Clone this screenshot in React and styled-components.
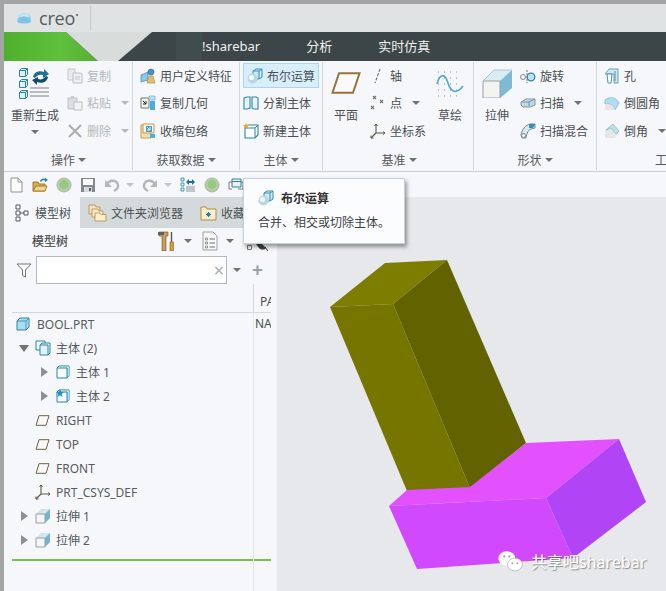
import styled, { createGlobalStyle } from 'styled-components'

const GlobalStyle = createGlobalStyle`
  html, body, #root {
    margin: 0;
    padding: 0;
    height: 100%;
  }
  body {
    overflow: hidden;
    font-family: "Noto Sans", "Noto Sans CJK SC", sans-serif;
    font-size: 12px;
    color: #4a4f52;
  }
`

const Window = styled.div`
  position: relative;
  width: 666px;
  height: 591px;
  box-sizing: border-box;
  padding: 4px 0 0 4px;
  background: #a3a5a5;
  display: flex;
  flex-direction: column;
  overflow: hidden;
`

const TitleBar = styled.div`
  height: 28px;
  flex-shrink: 0;
  background: #dfe3e3;
  display: flex;
  align-items: center;
  padding-left: 13px;
`

const CreoText = styled.span`
  font-family: "Open Sans", sans-serif;
  font-size: 18px;
  line-height: 20px;
  color: #565c5e;
  margin-left: 8px;
  letter-spacing: -0.2px;
`

const CreoDot = styled.span`
  width: 2px;
  height: 2px;
  margin: 0 0 7px 1px;
  border-radius: 50%;
  background: #565c5e;
`

const TitleDivider = styled.div`
  width: 1px;
  height: 24px;
  background: #c4c9c9;
  margin-left: 12px;
`

const TabBar = styled.div`
  position: relative;
  height: 29px;
  flex-shrink: 0;
  background: #3c4648;
  display: flex;
  align-items: center;
  gap: 46px;
  padding-left: 198px;
`

const TabArt = styled.svg`
  position: absolute;
  left: 0;
  top: 0;
`

const TabLabel = styled.span`
  position: relative;
  color: #eef1f1;
  font-size: 13px;
  line-height: 29px;
`

const Ribbon = styled.div`
  height: 111px;
  flex-shrink: 0;
  box-sizing: border-box;
  padding-top: 1px;
  background: #f5f7fa;
  border-bottom: 1px solid #c9cdd0;
  display: flex;
  overflow: hidden;
`

const Group = styled.div`
  width: ${p => p.$width}px;
  flex-shrink: 0;
  box-sizing: border-box;
  height: 108px;
  border-right: 1px solid ${p => (p.$last ? 'transparent' : '#d3d7da')};
  display: flex;
  flex-direction: column;
`

const GroupBody = styled.div`
  height: 88px;
  display: flex;
  padding-left: ${p => p.$pad || 0}px;
  gap: ${p => p.$gap || 0}px;
`

const GroupLabel = styled.div`
  height: 20px;
  display: flex;
  align-items: center;
  justify-content: ${p => (p.$start ? 'flex-start' : 'center')};
  gap: 3px;
  color: #55595c;
  white-space: nowrap;
  padding-left: ${p => p.$shift || 0}px;
`

const LargeButton = styled.div`
  width: ${p => p.$width || 36}px;
  flex-shrink: 0;
  display: flex;
  flex-direction: column;
  align-items: center;
`

const LargeIcon = styled.div`
  height: 42px;
  display: flex;
  align-items: center;
  justify-content: center;
`

const LargeText = styled.div`
  line-height: 24px;
  white-space: nowrap;
`

const SmallColumn = styled.div`
  width: ${p => (p.$width ? `${p.$width}px` : 'auto')};
  flex-shrink: 0;
  display: flex;
  flex-direction: column;
`

const SmallButton = styled.div`
  height: 27.6px;
  display: flex;
  align-items: center;
  gap: 4px;
  white-space: nowrap;
  color: ${p => (p.$disabled ? '#b4b8ba' : '#4a4f52')};
`

const ActiveFrame = styled.div`
  height: 25px;
  width: 76px;
  margin-top: 1px;
  margin-bottom: 1.6px;
  box-sizing: border-box;
  border: 1px solid #a9d7ee;
  background: #d8eefa;
  display: flex;
  align-items: center;
  gap: 4px;
  padding-left: 3px;
  white-space: nowrap;
`

const Caret = styled.span`
  display: inline-block;
  width: 0;
  height: 0;
  flex-shrink: 0;
  margin-left: ${p => p.$ml || 0}px;
  margin-top: ${p => p.$mt || 0}px;
  border-left: 4px solid transparent;
  border-right: 4px solid transparent;
  border-top: 4px solid ${p => p.$color || '#6d7275'};
`

const QuickBar = styled.div`
  height: 25px;
  flex-shrink: 0;
  background: #f5f7fa;
  display: flex;
  align-items: center;
  padding-left: 4px;
`

const QuickButton = styled.div`
  width: ${p => (p.$wide ? 38 : 24)}px;
  flex-shrink: 0;
  display: flex;
  align-items: center;
`

const Main = styled.div`
  flex: 1;
  min-height: 0;
  display: flex;
`

const LeftPanel = styled.div`
  width: 273px;
  flex-shrink: 0;
  background: #f5f7fa;
  display: flex;
  flex-direction: column;
`

const PanelTabs = styled.div`
  height: 31px;
  flex-shrink: 0;
  display: flex;
  align-items: center;
  background: #d4dadb;
`

const PanelTab = styled.div`
  height: 31px;
  width: ${p => p.$width}px;
  flex-shrink: 0;
  box-sizing: border-box;
  padding-left: ${p => p.$pad}px;
  display: flex;
  align-items: center;
  gap: ${p => p.$gap || 4}px;
  white-space: nowrap;
  overflow: hidden;
  background: ${p => (p.$active ? '#f5f7fa' : 'transparent')};
`

const TreeToolbar = styled.div`
  height: 28px;
  flex-shrink: 0;
  box-sizing: border-box;
  padding: 0 0 2px 28px;
  display: flex;
  align-items: center;
`

const TreeTitle = styled.span`
  width: 126px;
  color: #4a4a4a;
  -webkit-text-stroke: 0.2px #4a4a4a;
`

const ToolGroup = styled.div`
  display: flex;
  align-items: center;
  width: 44px;
  gap: 8px;
`

const FilterRow = styled.div`
  height: 28px;
  flex-shrink: 0;
  display: flex;
  align-items: center;
  padding-left: 12px;
`

const FilterBox = styled.div`
  width: 191px;
  height: 28px;
  box-sizing: border-box;
  margin-left: 4px;
  border: 1px solid #b5b9bc;
  background: #fff;
  display: flex;
  align-items: center;
  justify-content: flex-end;
  padding-right: 2px;
  color: #a9adb0;
  font-size: 18px;
`

const PlusMark = styled.span`
  margin-left: 11px;
  color: #9a9fa2;
  font-size: 19px;
  line-height: 20px;
  font-weight: 700;
`

const ColumnHeader = styled.div`
  height: 29px;
  flex-shrink: 0;
  box-sizing: border-box;
  margin: 0 6px 0 8px;
  border-bottom: 1px solid #d5d8db;
  display: flex;
`

const HeaderName = styled.div`
  width: 241px;
  flex-shrink: 0;
  border-right: 1px solid #d5d8db;
`

const HeaderValue = styled.div`
  padding: 9px 0 0 6px;
  width: 11px;
  overflow: hidden;
  line-height: 18px;
`

const TreeBody = styled.div`
  flex: 1;
  margin: 0 6px 0 8px;
  display: flex;
`

const NameColumn = styled.div`
  width: 241px;
  flex-shrink: 0;
  border-right: 1px solid #e2e6ea;
`

const ValueColumn = styled.div`
  flex: 1;
  overflow: hidden;
  white-space: nowrap;
`

const ValueCell = styled.div`
  height: 24px;
  box-sizing: border-box;
  padding: 0 0 2px 1px;
  line-height: 22px;
`

const TreeRow = styled.div`
  height: 24px;
  box-sizing: border-box;
  display: flex;
  align-items: center;
  padding: 0 0 2px ${p => p.$indent}px;
  white-space: nowrap;
  color: #575c5f;
`

const ArrowSlot = styled.span`
  width: ${p => p.$width}px;
  flex-shrink: 0;
  display: flex;
  align-items: center;
`

const ArrowRight = styled.span`
  width: 0;
  height: 0;
  border-top: 5px solid transparent;
  border-bottom: 5px solid transparent;
  border-left: 7px solid #8b9093;
`

const ArrowDown = styled.span`
  width: 0;
  height: 0;
  border-left: 5px solid transparent;
  border-right: 5px solid transparent;
  border-top: 7px solid #6f7477;
`

const TreeLabel = styled.span`
  margin-left: ${p => p.$gap || 5}px;
`

const EndLine = styled.div`
  height: 2px;
  margin-top: ${p => p.$top}px;
  background: #7dbf4e;
`

const Viewport = styled.div`
  flex: 1;
  position: relative;
  background: #e6e8ec;
`

const ModelSvg = styled.svg`
  display: block;
  width: 100%;
  height: 100%;
`

const Watermark = styled.div`
  position: absolute;
  left: 221px;
  top: 354px;
  display: flex;
  align-items: center;
  gap: 8px;
  color: #fff;
  font-size: 16px;
  line-height: 20px;
  white-space: nowrap;
  text-shadow: 1px 1px 1px rgba(60, 60, 60, 0.55);
`

const Tooltip = styled.div`
  position: absolute;
  left: 243px;
  top: 178px;
  width: 162px;
  height: 66px;
  box-sizing: border-box;
  padding: 10px 0 0 14px;
  background: #fbfcfd;
  border: 1px solid #c6d2d7;
  box-shadow: 2px 3px 4px rgba(0, 0, 0, 0.38);
`

const TooltipTitle = styled.div`
  display: flex;
  align-items: center;
  gap: 7px;
  height: 17px;
  font-weight: 700;
  color: #333;
`

const TooltipText = styled.div`
  margin-top: 8px;
  line-height: 18px;
  color: #3d4144;
  white-space: nowrap;
`

const Ico = ({ s = 16, h, vb = '0 0 16 16', children }) => (
  <svg width={s} height={h || s} viewBox={vb} fill="none" style={{ flexShrink: 0 }}>
    {children}
  </svg>
)

const CubeMini = ({ x, y }) => (
  <g transform={`translate(${x} ${y})`}>
    <path d="M0 2 L2 0 H8 V6 L6 8 H0 Z" fill="#dff2f8" stroke="#2b87a5" />
    <path d="M0 2 H6 V8 M6 2 L8 0" stroke="#2b87a5" />
  </g>
)

const RegenIcon = () => (
  <Ico s={32} vb="0 0 32 32">
    <CubeMini x={0.5} y={1.5} />
    <CubeMini x={0.5} y={12.5} />
    <CubeMini x={0.5} y={23.5} />
    <path d="M14 10 C15 5 20 3 25 5 L25 2 L30 7 L24 11 L24 8 C21 7 18 8 16 11 Z" fill="#1f6f8e" />
    <path d="M29 10 C28 15 23 17 18 15 L18 18 L13 13 L19 10 L19 12 C22 13 25 12 27 9 Z" fill="#124d63" />
    <path d="M11 21 H30 M11 25 H30 M11 29 H30" stroke="#a3a7aa" strokeWidth="1.5" />
  </Ico>
)

const CopyIcon = () => (
  <Ico>
    <path d="M1 1 H8 V12 H1 Z" fill="#e8eaec" stroke="#c3c6c8" />
    <path d="M6 5 H14 L15 6 V15 H6 Z" fill="#eef0f1" stroke="#bcc0c2" />
    <path d="M8 9 H13 M8 11 H13" stroke="#c3c6c8" />
  </Ico>
)

const PasteIcon = () => (
  <Ico>
    <path d="M1 3 H10 V14 H1 Z" fill="#dcdedf" stroke="#c0c3c5" />
    <path d="M4 1 H7 V4 H4 Z" fill="#c8cbcd" />
    <path d="M7 7 H15 V15 H7 Z" fill="#f0f1f2" stroke="#bcc0c2" />
  </Ico>
)

const DeleteIcon = () => (
  <Ico>
    <path d="M2 2 L14 14 M14 2 L2 14" stroke="#a9adaf" strokeWidth="2" />
  </Ico>
)

const UserFeatureIcon = () => (
  <Ico>
    <path d="M1 7 L8 4 V12 L1 14 Z" fill="#8cc7e6" stroke="#3a86ad" strokeWidth="0.7" />
    <circle cx="11" cy="4" r="3" fill="#4d8fc9" stroke="#2a5f95" strokeWidth="0.6" />
    <path d="M7 15 L9 8 H13 L15 15 Z" fill="#e7bd6c" stroke="#a9843c" strokeWidth="0.6" />
  </Ico>
)

const CopyGeomIcon = () => (
  <Ico>
    <path d="M1 3 H9 V13 H1 Z" fill="#f2f2f0" stroke="#74797b" />
    <path d="M3 6 L6 9 M6 6 V9 H3" stroke="#222" />
    <path d="M9 1 L15 1 V5 H9 Z" fill="#bfe0ef" stroke="#5fa8c8" strokeWidth="0.6" />
    <path d="M10 6 H15 V15 H10 Z" fill="#45aedb" />
  </Ico>
)

const ShrinkIcon = () => (
  <Ico>
    <path d="M1 2 H11 V15 H1 Z" fill="#f4ddb0" stroke="#c49a4e" />
    <path d="M3 1 H14 V10 H3 Z" fill="#f8f4e8" stroke="#c49a4e" />
    <path d="M6 3 H12 V9 H6 Z" fill="#3fa0cd" />
    <path d="M7 4 L10 7 M10 4 V7 H7" stroke="#fff" />
    <path d="M10 11 H15 V15 H10 Z" fill="#4fb2dc" />
  </Ico>
)

const BooleanIcon = () => (
  <Ico>
    <path d="M6 3 L9 1 H15 V9 L12 11 H6 Z" fill="#cfe9f4" stroke="#3a8fb0" />
    <path d="M12 3 V11 M6 3 H12 L15 1" stroke="#3a8fb0" />
    <circle cx="5.5" cy="10.5" r="5" fill="#b9d6e3" />
    <circle cx="4.5" cy="9.5" r="2.6" fill="#eef8fc" />
  </Ico>
)

const SplitIcon = () => (
  <Ico>
    <path d="M1 3 L4 2 H7 V13 L4 14 H1 Z" fill="#e7f4f9" stroke="#2b87a5" strokeWidth="1.1" />
    <path d="M9 2 H13 L15 3 V14 H11 L9 13 Z" fill="#e7f4f9" stroke="#2b87a5" strokeWidth="1.1" />
  </Ico>
)

const NewBodyIcon = () => (
  <Ico>
    <path d="M2 5 L5 2 H15 V12 L12 15 H2 Z" fill="#fdfefe" stroke="#2b87a5" strokeWidth="1.1" />
    <path d="M2 5 H12 V15 M12 5 L15 2" stroke="#2b87a5" />
    <path d="M3 0 L4 2 L6 2 L4.5 3.5 L5 6 L3 4.6 L1 6 L1.5 3.5 L0 2 L2 2 Z" fill="#eba71e" />
  </Ico>
)

const PlaneIcon = ({ s = 30, h = 22, w = 2 }) => (
  <Ico s={s} h={h} vb="0 0 30 22">
    <path d="M8 1.2 H28.5 L22 20.8 H1.5 Z" fill="#fafafa" stroke="#94743c" strokeWidth={w} />
  </Ico>
)

const AxisIcon = () => (
  <Ico>
    <path d="M10 1 L5 15" stroke="#6a6f72" strokeWidth="1.1" strokeDasharray="3 1.5" />
  </Ico>
)

const PointIcon = () => (
  <Ico>
    <path d="M3 1 L6 4 M6 1 L3 4 M1 11 L4 14 M4 11 L1 14 M10 5 L13 8 M13 5 L10 8" stroke="#70757a" strokeWidth="1.1" />
  </Ico>
)

const CsysIcon = ({ stroke = '#5e5a46' }) => (
  <Ico>
    <path d="M6 1 V10 M6 10 H15 M6 10 L1 15" stroke={stroke} strokeWidth="1.1" />
    <path d="M4.5 3 L6 1 L7.5 3 M13 8.5 L15 10 L13 11.5 M1 12.5 V15 H3.5" stroke={stroke} />
  </Ico>
)

const SketchIcon = () => (
  <Ico s={28} vb="0 0 28 28">
    <path d="M2 3 H26 M2 9 H26 M2 15 H26 M2 21 H26 M2 27 H26" stroke="#8a8f92" strokeDasharray="1 5" />
    <path d="M1 15 C4 4 9 4 12 14 C15 24 21 25 27 17" stroke="#54aecf" strokeWidth="1.7" />
  </Ico>
)

const ExtrudeIcon = ({ s = 30 }) => (
  <Ico s={s} vb="0 0 30 30">
    <path d="M1 13 L12 2 H30 V20 L18 30 H1 Z" fill="#d8ecf4" />
    <path d="M18 13 L30 2 V20 L18 30 Z" fill="#7fbad5" />
    <path d="M1 13 H18 V30 H1 Z" fill="#f3f3f2" stroke="#9a9fa2" />
    <path d="M1 13 L12 2 H30" stroke="#a9c6d2" />
  </Ico>
)

const RevolveIcon = () => (
  <Ico>
    <circle cx="3" cy="9" r="2.5" stroke="#83888a" />
    <circle cx="11" cy="9" r="3.8" fill="#bfe2f0" stroke="#2b87a5" strokeWidth="1.3" />
    <path d="M7 2 V15" stroke="#74797b" strokeDasharray="2 1" />
  </Ico>
)

const SweepIcon = () => (
  <Ico>
    <path d="M1 7 L6 4 H15 V10 L10 12 H3 L1 10 Z" fill="#c5d6dc" stroke="#83979f" />
    <path d="M2 7 H9 V11 M9 7 L15 4" stroke="#5a9ebb" />
  </Ico>
)

const BlendIcon = () => (
  <Ico>
    <path d="M1 12 C2 6 6 2 10 1 H15 V5 L11 6 C8 7 7 10 6 15 H2 Z" fill="#dce8ed" stroke="#70878f" />
    <path d="M9 1 L15 1 L13 5 L9 5 Z" fill="#2f8fb8" />
    <circle cx="3.5" cy="12.5" r="2" stroke="#83888a" fill="#eef2f4" />
  </Ico>
)

const HoleIcon = () => (
  <Ico>
    <path d="M1 6 L5 1 H14 V15 H10 L10 6 Z" fill="#d0e7f0" stroke="#6d9fb4" />
    <path d="M3 6 H8 L7 15 H4 Z" fill="#fff" stroke="#4f93af" />
    <path d="M11 3 V13" stroke="#4f93af" />
  </Ico>
)

const RoundIcon = () => (
  <Ico>
    <path d="M1 5 C6 1 12 2 15 8 L11 15 C9 10 6 8 1 9 Z" fill="#b4dcec" stroke="#7fb4cb" strokeWidth="0.7" />
    <path d="M1 9 C6 8 9 10 11 15 H1 Z" fill="#e4e6e6" />
  </Ico>
)

const ChamferIcon = () => (
  <Ico>
    <path d="M1 8 L9 1 L15 8 L11 15 H1 Z" fill="#e5e7e7" />
    <path d="M2 7 L9 1 L15 8 L12 11 L7 5 Z" fill="#bfe0ee" stroke="#7fb4cb" strokeWidth="0.7" />
  </Ico>
)

const NewFileIcon = () => (
  <Ico>
    <path d="M3 1 H10 L14 5 V15 H3 Z" fill="#fcfcfc" stroke="#8f9396" />
    <path d="M10 1 V5 H14" stroke="#8f9396" />
  </Ico>
)

const OpenIcon = () => (
  <Ico>
    <path d="M1 5 H6 L7 7 H13 V14 H1 Z" fill="#d9a94f" stroke="#a57b2d" />
    <path d="M1 14 L4 9 H15 L13 14 Z" fill="#f3d48c" stroke="#a57b2d" />
    <path d="M8 4 C9 2 11 1 13 2 L13 0.5 L16 3 L13 5 L13 3.5 C11 3 10 3.5 9 5 Z" fill="#3a7f98" />
  </Ico>
)

const GreenBall = () => (
  <Ico>
    <circle cx="8" cy="8" r="7" fill="#b5cbaa" stroke="#a9b8a2" />
    <circle cx="8" cy="7.5" r="4.4" fill="#99c77e" />
  </Ico>
)

const SaveIcon = () => (
  <Ico>
    <path d="M1 1 H15 V15 H1 Z" fill="#808a8f" />
    <path d="M3 2 H13 V8 H3 Z" fill="#fdfdfd" />
    <path d="M4 10 H12 V15 H4 Z" fill="#d7dadc" />
    <path d="M9 11 H11 V14 H9 Z" fill="#566066" />
  </Ico>
)

const UndoIcon = ({ flip }) => (
  <Ico>
    <g transform={flip ? 'matrix(-1 0 0 1 16 0)' : undefined}>
      <path d="M3 7 C6 2 13 3 14 8 C14.5 11 12 13 10 14" stroke="#b3b7ba" strokeWidth="2.4" />
      <path d="M1 3 V10 H8 Z" fill="#b3b7ba" />
    </g>
  </Ico>
)

const RegenSmallIcon = () => (
  <Ico>
    <path d="M1 1 H4 V4 H1 Z M1 6 H4 V9 H1 Z M1 11 H4 V14 H1 Z" fill="#e2f2f8" stroke="#2b87a5" strokeWidth="0.8" />
    <path d="M6 5 L9 2 V4 H12 V2 L15 5 L12 8 V6 H9 V8 Z" fill="#1f6f8e" />
    <path d="M6 10 H15 M6 12 H15 M6 14 H15" stroke="#8f9396" />
  </Ico>
)

const WindowIcon = () => (
  <Ico>
    <path d="M1 5 H4 M1 5 V12 H4" stroke="#777c80" />
    <path d="M4 2 H13 V10 H4 Z" fill="#e3f1f7" stroke="#3d7c96" />
    <path d="M4 4.5 H13" stroke="#3d7c96" />
    <path d="M13 5 H15 V12 H10" stroke="#777c80" />
  </Ico>
)

const ModelTreeIcon = () => (
  <Ico s={14} h={18} vb="0 0 14 18">
    <path d="M1 1 H5 V5 H1 Z M1 7 H5 V11 H1 Z M9 7 H13 V11 H9 Z M1 13 H5 V17 H1 Z" stroke="#55595c" />
    <path d="M5 9 H9" stroke="#55595c" />
  </Ico>
)

const FolderStackIcon = () => (
  <Ico s={19} vb="0 0 19 19">
    <path d="M1 2 H7 L8 4 H12 V11 H1 Z" fill="#f3e2bd" stroke="#b28b45" strokeWidth="0.8" />
    <path d="M4 6 H10 L11 8 H15 V14 H4 Z" fill="#f6e8c8" stroke="#b28b45" strokeWidth="0.8" />
    <path d="M7 10 H12 L13 11.5 H18 V18 H7 Z" fill="#fbeecd" stroke="#b28b45" strokeWidth="0.8" />
  </Ico>
)

const FolderStarIcon = () => (
  <Ico s={17} vb="0 0 17 17">
    <path d="M1 3 H6 L7 5 H16 V16 H1 Z" fill="#fbeecd" stroke="#b28b45" />
    <path d="M6 10.5 H11 M8.5 8 V13 M6.8 8.8 L10.2 12.2 M10.2 8.8 L6.8 12.2" stroke="#1f7ea1" />
  </Ico>
)

const ToolsIcon = () => (
  <Ico s={18} h={20} vb="0 0 18 20">
    <path d="M1 1 H10 V5 H8 V20 H4 V5 H1 Z" fill="#c99b5a" stroke="#6a4d22" strokeWidth="0.6" />
    <path d="M0 1 H6 V4 H0 Z" fill="#5e5f5f" />
    <path d="M13.5 1 V11" stroke="#555" strokeWidth="1.4" />
    <path d="M12 11 H15.5 V20 H12 Z" fill="#dd9c33" stroke="#7d6022" strokeWidth="0.6" />
  </Ico>
)

const ListIcon = () => (
  <Ico s={16} h={20} vb="0 0 16 20">
    <path d="M1 1 H11 L15 5 V19 H1 Z" fill="#f8f8f6" stroke="#9da1a4" />
    <path d="M3.5 7 H5.5 V9 H3.5 Z M3.5 11 H5.5 V13 H3.5 Z M3.5 15 H5.5 V17 H3.5 Z" stroke="#6d7275" strokeWidth="0.7" />
    <path d="M7.5 8 H13 M7.5 12 H13 M7.5 16 H13" stroke="#6d7275" />
  </Ico>
)

// only its lower edge shows below the tooltip
const ShowIcon = () => (
  <Ico s={22} h={22} vb="0 0 22 22">
    <path d="M1.5 15.5 H5.5 V19.5 H1.5 Z" stroke="#777c80" />
    <path d="M10 14 L13 18 C15 20 19 20 20 18 L16 14 Z" fill="#3d3f40" />
    <path d="M19 17 L22 21" stroke="#333" />
  </Ico>
)

const FunnelIcon = () => (
  <Ico s={16} h={15} vb="0 0 16 15">
    <path d="M1 1 H15 L9.5 7 V14 L6.5 12.5 V7 Z" fill="#fbfbfb" stroke="#70757a" />
  </Ico>
)

const PartIcon = () => (
  <Ico s={14} vb="0 0 14 14">
    <path d="M1 4 L4 1 H13 V10 L10 13 H1 Z" fill="#a9ddf1" stroke="#2b87a5" />
    <path d="M1 4 H10 V13 M10 4 L13 1" stroke="#2b87a5" strokeWidth="0.8" />
  </Ico>
)

const BodiesIcon = () => (
  <Ico>
    <path d="M1 1 H10 V10 H1 Z" fill="#f5fafc" stroke="#2b87a5" />
    <path d="M5 5 L7 3 H15 V13 L13 15 H5 Z" fill="#e3f2f8" stroke="#2b87a5" />
    <path d="M5 5 H13 V15" stroke="#2b87a5" />
  </Ico>
)

const BodyIcon = ({ star }) => (
  <Ico s={14} vb="0 0 14 14">
    <path d="M1 3 L3 1 H13 V11 L11 13 H1 Z" fill="#f8fcfd" stroke="#2b87a5" />
    <path d="M11 1.5 H13 V11 L11 13 Z" fill="#a9ddf1" />
    <path d="M1 3 H11 V13" stroke="#2b87a5" />
    {star && <path d="M4 0 L5.2 3 L8 3 L5.8 5 L6.6 8 L4 6.3 L1.4 8 L2.2 5 L0 3 L2.8 3 Z" fill="#1c96c4" />}
  </Ico>
)

const DatumIcon = () => (
  <Ico s={15} h={11} vb="0 0 15 11">
    <path d="M4 0.7 H14 L11 10.3 H1 Z" fill="#fafafa" stroke="#6e6243" />
  </Ico>
)

const ExtrudeTreeIcon = () => (
  <Ico>
    <path d="M1 6 L6 1 H15 V10 L10 15 H1 Z" fill="#cfe7f1" />
    <path d="M10 6 L15 1 V10 L10 15 Z" fill="#74b3d0" />
    <path d="M1 6 H10 V15 H1 Z" fill="#f6f6f6" stroke="#9a9fa2" />
  </Ico>
)

const WeChatIcon = () => (
  <Ico s={25} h={21} vb="0 0 20 17">
    <ellipse cx="7" cy="6" rx="6.8" ry="5.8" fill="#fff" />
    <ellipse cx="13.6" cy="11" rx="6" ry="5.2" fill="#fff" stroke="#b9b9bd" strokeWidth="0.7" />
    <circle cx="5" cy="4.4" r="0.9" fill="#a3a3a6" />
    <circle cx="9" cy="4.4" r="0.9" fill="#a3a3a6" />
    <circle cx="11.6" cy="10" r="0.8" fill="#a3a3a6" />
    <circle cx="15.6" cy="10" r="0.8" fill="#a3a3a6" />
  </Ico>
)

const Small = ({ icon, label, disabled, caret, caretGap = 6 }) => (
  <SmallButton $disabled={disabled}>
    {icon}
    <span>{label}</span>
    {caret && <Caret $ml={caretGap} $color={disabled ? '#b4b8ba' : '#6d7275'} />}
  </SmallButton>
)

const treeRows = [
  { key: 'part', indent: 4, slot: 0, icon: <PartIcon />, label: 'BOOL.PRT', gap: 7 },
  { key: 'bodies', indent: 7, slot: 16, arrow: <ArrowDown />, icon: <BodiesIcon />, label: '主体 (2)' },
  { key: 'body1', indent: 29, slot: 15, arrow: <ArrowRight />, icon: <BodyIcon />, label: '主体 1', gap: 6 },
  { key: 'body2', indent: 29, slot: 15, arrow: <ArrowRight />, icon: <BodyIcon star />, label: '主体 2', gap: 6 },
  { key: 'right', indent: 23, slot: 0, icon: <DatumIcon />, label: 'RIGHT', gap: 6 },
  { key: 'top', indent: 23, slot: 0, icon: <DatumIcon />, label: 'TOP', gap: 6 },
  { key: 'front', indent: 23, slot: 0, icon: <DatumIcon />, label: 'FRONT', gap: 6 },
  { key: 'csys', indent: 23, slot: 0, icon: <CsysIcon />, label: 'PRT_CSYS_DEF', gap: 5 },
  { key: 'ext1', indent: 9, slot: 14, arrow: <ArrowRight />, icon: <ExtrudeTreeIcon />, label: '拉伸 1' },
  { key: 'ext2', indent: 9, slot: 14, arrow: <ArrowRight />, icon: <ExtrudeTreeIcon />, label: '拉伸 2' },
]

function App() {
  return (
    <Window>
      <GlobalStyle />

      <TitleBar>
        <Ico s={14} h={11} vb="0 0 14 11">
          <path d="M2 2 C5 0 11 0 13 2 L14 9 C10 11 4 11 0 9 Z" fill="#7cc4e8" />
          <path d="M2 2 C5 0 11 0 13 2 L12 5 C9 3 5 3 1 5 Z" fill="#c3e4f4" />
        </Ico>
        <CreoText>creo</CreoText>
        <CreoDot />
        <TitleDivider />
      </TitleBar>

      <TabBar>
        <TabArt width="206" height="29" viewBox="0 0 206 29">
          <defs>
            <linearGradient id="leaf" x1="0" y1="0" x2="1" y2="0">
              <stop offset="0" stopColor="#4fb02e" />
              <stop offset="0.6" stopColor="#5fc03c" />
              <stop offset="1" stopColor="#55ae35" />
            </linearGradient>
          </defs>
          <path d="M0 0 H62 L94 29 H0 Z" fill="url(#leaf)" />
          <path d="M62 0 H148 L114 29 H94 Z" fill="#d8dcdb" />
          <path d="M172 0 H198 V29 H172 Z" fill="#414c4e" />
        </TabArt>
        <TabLabel>!sharebar</TabLabel>
        <TabLabel>分析</TabLabel>
        <TabLabel>实时仿真</TabLabel>
      </TabBar>

      <Ribbon>
        <Group $width={129}>
          <GroupBody $pad={1} $gap={2}>
            <LargeButton $width={60}>
              <LargeIcon><RegenIcon /></LargeIcon>
              <LargeText>重新生成</LargeText>
              <Caret $mt={2} />
            </LargeButton>
            <SmallColumn>
              <Small disabled icon={<CopyIcon />} label="复制" />
              <Small disabled icon={<PasteIcon />} label="粘贴" caret />
              <Small disabled icon={<DeleteIcon />} label="删除" caret />
            </SmallColumn>
          </GroupBody>
          <GroupLabel $shift={1}>操作<Caret /></GroupLabel>
        </Group>

        <Group $width={107}>
          <GroupBody $pad={7}>
            <SmallColumn>
              <Small icon={<UserFeatureIcon />} label="用户定义特征" />
              <Small icon={<CopyGeomIcon />} label="复制几何" />
              <Small icon={<ShrinkIcon />} label="收缩包络" />
            </SmallColumn>
          </GroupBody>
          <GroupLabel>获取数据<Caret /></GroupLabel>
        </Group>

        <Group $width={83}>
          <GroupBody $pad={3}>
            <SmallColumn>
              <ActiveFrame><BooleanIcon /><span>布尔运算</span></ActiveFrame>
              <Small icon={<SplitIcon />} label="分割主体" />
              <Small icon={<NewBodyIcon />} label="新建主体" />
            </SmallColumn>
          </GroupBody>
          <GroupLabel>主体<Caret /></GroupLabel>
        </Group>

        <Group $width={151}>
          <GroupBody $pad={5} $gap={6}>
            <LargeButton>
              <LargeIcon><PlaneIcon /></LargeIcon>
              <LargeText>平面</LargeText>
            </LargeButton>
            <SmallColumn $width={56}>
              <Small icon={<AxisIcon />} label="轴" />
              <Small icon={<PointIcon />} label="点" caret />
              <Small icon={<CsysIcon />} label="坐标系" />
            </SmallColumn>
            <LargeButton>
              <LargeIcon><SketchIcon /></LargeIcon>
              <LargeText>草绘</LargeText>
            </LargeButton>
          </GroupBody>
          <GroupLabel $shift={2}>基准<Caret /></GroupLabel>
        </Group>

        <Group $width={123}>
          <GroupBody $pad={5} $gap={5}>
            <LargeButton>
              <LargeIcon><ExtrudeIcon /></LargeIcon>
              <LargeText>拉伸</LargeText>
            </LargeButton>
            <SmallColumn>
              <Small icon={<RevolveIcon />} label="旋转" />
              <Small icon={<SweepIcon />} label="扫描" caret />
              <Small icon={<BlendIcon />} label="扫描混合" />
            </SmallColumn>
          </GroupBody>
          <GroupLabel>形状<Caret /></GroupLabel>
        </Group>

        <Group $width={70} $last>
          <GroupBody $pad={7}>
            <SmallColumn>
              <Small icon={<HoleIcon />} label="孔" />
              <Small icon={<RoundIcon />} label="倒圆角" />
              <Small icon={<ChamferIcon />} label="倒角" caret />
            </SmallColumn>
          </GroupBody>
          <GroupLabel $start $shift={58}>工</GroupLabel>
        </Group>
      </Ribbon>

      <QuickBar>
        <QuickButton><NewFileIcon /></QuickButton>
        <QuickButton><OpenIcon /></QuickButton>
        <QuickButton><GreenBall /></QuickButton>
        <QuickButton><SaveIcon /></QuickButton>
        <QuickButton $wide><UndoIcon /><Caret $ml={6} $color="#c2c5c8" /></QuickButton>
        <QuickButton $wide><UndoIcon flip /><Caret $ml={6} $color="#c2c5c8" /></QuickButton>
        <QuickButton><RegenSmallIcon /></QuickButton>
        <QuickButton><GreenBall /></QuickButton>
        <QuickButton><WindowIcon /></QuickButton>
      </QuickBar>

      <Main>
        <LeftPanel>
          <PanelTabs>
            <PanelTab $active $width={76} $pad={11} $gap={6}>
              <ModelTreeIcon />
              <span>模型树</span>
            </PanelTab>
            <PanelTab $width={112} $pad={8}>
              <FolderStackIcon />
              <span>文件夹浏览器</span>
            </PanelTab>
            <PanelTab $width={85} $pad={8}>
              <FolderStarIcon />
              <span>收藏夹</span>
            </PanelTab>
          </PanelTabs>

          <TreeToolbar>
            <TreeTitle>模型树</TreeTitle>
            <ToolGroup><ToolsIcon /><Caret /></ToolGroup>
            <ToolGroup><ListIcon /><Caret /></ToolGroup>
            <ShowIcon />
          </TreeToolbar>

          <FilterRow>
            <FunnelIcon />
            <FilterBox>×</FilterBox>
            <Caret $ml={6} />
            <PlusMark>+</PlusMark>
          </FilterRow>

          <ColumnHeader>
            <HeaderName />
            <HeaderValue>PA</HeaderValue>
          </ColumnHeader>

          <TreeBody>
            <NameColumn>
              {treeRows.map(row => (
                <TreeRow key={row.key} $indent={row.indent}>
                  {row.slot > 0 && <ArrowSlot $width={row.slot}>{row.arrow}</ArrowSlot>}
                  {row.icon}
                  <TreeLabel $gap={row.gap}>{row.label}</TreeLabel>
                </TreeRow>
              ))}
              <EndLine $top={6} />
            </NameColumn>
            <ValueColumn>
              <ValueCell>NA</ValueCell>
              <EndLine $top={222} />
            </ValueColumn>
          </TreeBody>
        </LeftPanel>

        <Viewport>
          <ModelSvg viewBox="277 197 389 394">
            <path d="M330 307 L385 263 L447 260 L393 304 Z" fill="#7d7d00" />
            <path d="M330 307 L393 304 L470 488 L407 491 Z" fill="#757500" />
            <path d="M393 304 L447 260 L526 443 L470 488 Z" fill="#626200" />
            <path d="M389 506 L407 490 L470 487 L526 443 L619 439 L546 498 Z" fill="#e251fd" />
            <path d="M389 506 L546 498 L573 558 L417 569 Z" fill="#d049fd" />
            <path d="M546 498 L619 439 L646 502 L573 558 Z" fill="#b144f5" />
          </ModelSvg>
          <Watermark>
            <WeChatIcon />
            <span>共享吧sharebar</span>
          </Watermark>
        </Viewport>
      </Main>

      <Tooltip>
        <TooltipTitle><BooleanIcon /><span>布尔运算</span></TooltipTitle>
        <TooltipText>合并、相交或切除主体。</TooltipText>
      </Tooltip>
    </Window>
  )
}

export default App
